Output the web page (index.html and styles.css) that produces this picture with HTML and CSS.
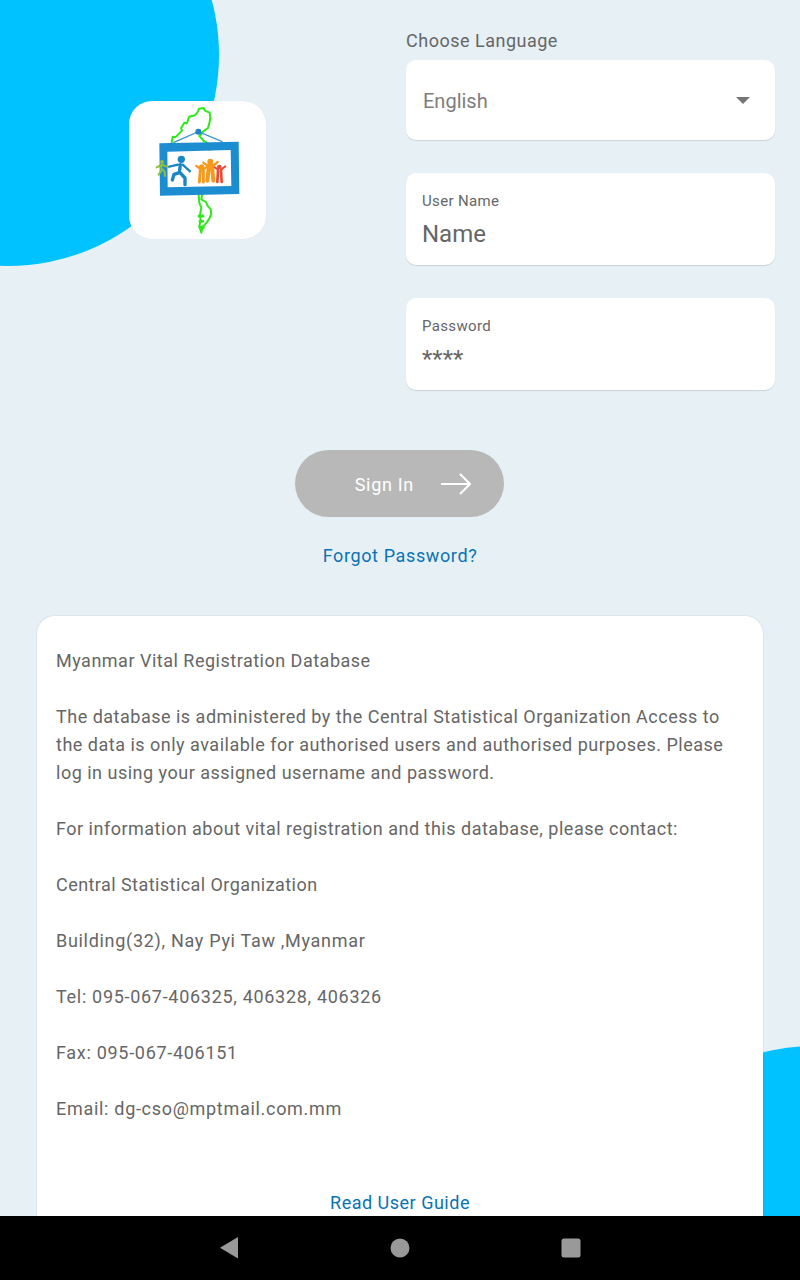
FILE: index.html
```html
<!DOCTYPE html>
<html lang="en">
<head>
<meta charset="utf-8">
<title>Myanmar Vital Registration Database</title>
<link rel="stylesheet" href="styles.css">
</head>
<body>
<div class="screen">
  <main class="content">
    <div class="blob blob-top"></div>
    <div class="blob blob-bottom"></div>
    <section class="top">
      <div class="logo-col">
        <div class="logo">
          <svg class="logo-svg" viewBox="27 33 411 414" width="137" height="138" aria-label="Logo">
            <path class="map" d="M155 158l3-18 8 2 20-20-3-8 10-16 8 2 6-20 18-4 8-10 4-10 14-2 4 8 14 6 2 16-3 16-4 14-14 10-6 8-6 6 8 8 4 6 14 8 4 8v12"/>
            <path class="map" d="M236 315l2 24 6 14-4 22 2 16-4 18 6 19 4-18 10-10 10-14 6-14-2-14-10-12-4-10-14-8 2-12 6-11"/>
            <path class="map map-thick" d="M237 378h12M240 394h8M240 412h10"/>
            <path class="wire" d="M160 158l75-33 72 30"/>
            <circle class="blue" cx="235" cy="125" r="9"/>
            <path class="frame" fill-rule="evenodd" d="M118 160l238-5 2 157-238 5zM142 185l1 107 191-4-2-108z"/>
            <g class="lime-fig">
              <circle class="lime" cx="126" cy="216" r="6"/>
              <path d="M110 232l8-4 8-4 8 4 12 2M124 226v16l-8 12M128 238l6 8 1 12"/>
            </g>
            <g class="blue-fig">
              <circle class="blue" cx="184" cy="208" r="11"/>
              <path class="thin" d="M148 230l26-6M188 224l22 20"/>
              <path d="M181 224l-3 24-16 5-5 17M180 248l15 16 0 20"/>
            </g>
            <g class="orange-fig">
              <circle class="orange" cx="245" cy="231" r="8"/>
              <path class="thin" d="M229 228l14 10M250 238l12-8"/>
              <path d="M241 240l-3 36M250 240v36"/>
              <circle class="orange" cx="271" cy="215" r="9"/>
              <path class="thin" d="M250 218l14 10M279 228l14-12"/>
              <path class="wide" d="M267 226l-5 46M276 226l4 46"/>
            </g>
            <g class="red-fig">
              <circle class="red" cx="298" cy="231" r="7"/>
              <path class="thin" d="M284 232l10 6M304 238l12-9"/>
              <path d="M294 240l-2 36M303 240l2 36"/>
            </g>
          </svg>
        </div>
      </div>
      <form class="form-col">
        <p class="choose">Choose Language</p>
        <div class="field field-select">
          <span class="select-value">English</span>
          <span class="caret"></span>
        </div>
        <div class="field">
          <span class="field-label">User Name</span>
          <span class="field-value">Name</span>
        </div>
        <div class="field">
          <span class="field-label">Password</span>
          <span class="field-value">****</span>
        </div>
      </form>
    </section>
    <div class="actions">
      <button class="signin" type="button">
        <span>Sign In</span>
        <svg class="arrow" viewBox="0 0 30 22" width="30" height="22"><path d="M0 11H29M19 1l10 10-10 10"/></svg>
      </button>
      <a class="link forgot" href="#">Forgot Password?</a>
    </div>
    <article class="card">
      <p>Myanmar Vital Registration Database</p>
      <p>The database is administered by the Central Statistical Organization Access to the data is only available for authorised users and authorised purposes. Please log in using your assigned username and password.</p>
      <p>For information about vital registration and this database, please contact:</p>
      <p class="org">Central Statistical Organization</p>
      <p class="contact">Building(32), Nay Pyi Taw ,Myanmar</p>
      <p class="contact">Tel: 095-067-406325, 406328, 406326</p>
      <p class="contact">Fax: 095-067-406151</p>
      <p class="contact">Email: dg-cso@mptmail.com.mm</p>
      <a class="link guide" href="#">Read User Guide</a>
    </article>
  </main>
  <nav class="navbar">
    <svg viewBox="0 0 20 24" width="20" height="24"><path d="M19 1v21.500L1 11.700z"/></svg>
    <svg viewBox="0 0 20 20" width="20" height="20"><circle cx="10" cy="10" r="9.500"/></svg>
    <svg viewBox="0 0 20 20" width="20" height="20"><rect x="0.500" y="0.500" width="19" height="19" rx="2.500"/></svg>
  </nav>
</div>
</body>
</html>
```
FILE: styles.css
```css
* { box-sizing: border-box; }
html, body { margin: 0; padding: 0; }
body { font-family: Roboto, "Liberation Sans", sans-serif; background: #e7f0f5; color: #666; }
.screen { width: 800px; height: 1280px; display: flex; flex-direction: column; overflow: hidden; }
.content { position: relative; flex: 1; min-height: 0; overflow: hidden; background: #e7f0f5; }
.blob { position: absolute; width: 422px; height: 422px; border-radius: 50%; background: #00c2ff; }
.blob-top { left: -203px; top: -156px; }
.blob-bottom { left: 604px; top: 1046px; }
.top { position: relative; display: grid; grid-template-columns: 395px 369px; column-gap: 11px; }
.logo-col { display: flex; justify-content: center; padding-top: 101px; }
.logo { width: 137px; height: 138px; border-radius: 23px; background: #fff; box-shadow: 0 0 1px rgba(0,0,0,.1); }
.logo-svg { display: block; }
.map { fill: none; stroke: #2fe81c; stroke-width: 6; stroke-linejoin: round; stroke-linecap: round; }
.map-thick { stroke-width: 9; }
.wire { fill: none; stroke: #3b95d3; stroke-width: 4; }
.blue { fill: #1a86c8; }
.frame { fill: #1b8dd0; }
.lime { fill: #8fbf3f; }
.orange { fill: #f59a1e; }
.red { fill: #ea4b35; }
.lime-fig path, .blue-fig path, .orange-fig path, .red-fig path { fill: none; stroke-linecap: round; stroke-linejoin: round; }
.lime-fig path { stroke: #8fbf3f; stroke-width: 6; }
.blue-fig path { stroke: #1a86c8; stroke-width: 10; }
.blue-fig .thin { stroke-width: 7; }
.orange-fig path { stroke: #f59a1e; stroke-width: 9; }
.orange-fig .thin { stroke-width: 7; }
.orange-fig .wide { stroke-width: 12; }
.red-fig path { stroke: #ea4b35; stroke-width: 8; }
.red-fig .thin { stroke-width: 6; }
.form-col { display: flex; flex-direction: column; gap: 33px; margin: 0; padding-top: 29px; }
.choose { margin: 0 0 -33px; height: 31px; font-size: 18px; line-height: 23px; letter-spacing: .5px; color: #666; }
.field { height: 92px; background: #fff; border-radius: 10px; box-shadow: 0 1px 1px rgba(0,0,0,.12); padding: 18px 16px 0; display: flex; flex-direction: column; }
.field-select { height: 80px; padding: 2px 17px 0; flex-direction: row; align-items: center; justify-content: space-between; }
.select-value { font-size: 20px; color: #7d7d7d; }
.caret { width: 0; height: 0; margin-right: 8px; margin-bottom: 2px; border-left: 7px solid transparent; border-right: 7px solid transparent; border-top: 7px solid #757575; }
.field-label { font-size: 15px; line-height: 20px; letter-spacing: .35px; color: #666; }
.field-value { font-size: 24px; line-height: 32px; margin-top: 7px; color: #666; }
.actions { position: relative; display: flex; flex-direction: column; align-items: center; margin-top: 60px; }
.signin { width: 209px; height: 67px; margin-right: 1px; border: 0; border-radius: 34px; background: #b8b8b8; color: #fff; font: 18px Roboto, sans-serif; letter-spacing: .7px; display: flex; align-items: center; justify-content: flex-end; gap: 27px; padding: 1px 33px 0 0; }
.arrow { fill: none; stroke: #fff; stroke-width: 2; }
.link { color: #0a73b5; font-size: 18px; line-height: 24px; letter-spacing: .5px; text-decoration: none; }
.forgot { margin-top: 27px; letter-spacing: .62px; }
.card { position: relative; margin: 48px 37px 0; height: 700px; padding: 31px 19px 0; background: #fff; border-radius: 18px; box-shadow: 0 0 2px rgba(0,0,0,.14); font-size: 18px; line-height: 28px; letter-spacing: .5px; color: #666; display: flex; flex-direction: column; }
.card p { margin: 0 0 28px; }
.card .org { letter-spacing: .44px; }
.card .contact { letter-spacing: .7px; }
.guide { margin-top: 40px; align-self: center; }
.navbar { flex: none; height: 64px; background: #000; display: flex; align-items: center; padding-left: 219px; gap: 151px; }
.navbar svg { fill: #999; display: block; }
```
